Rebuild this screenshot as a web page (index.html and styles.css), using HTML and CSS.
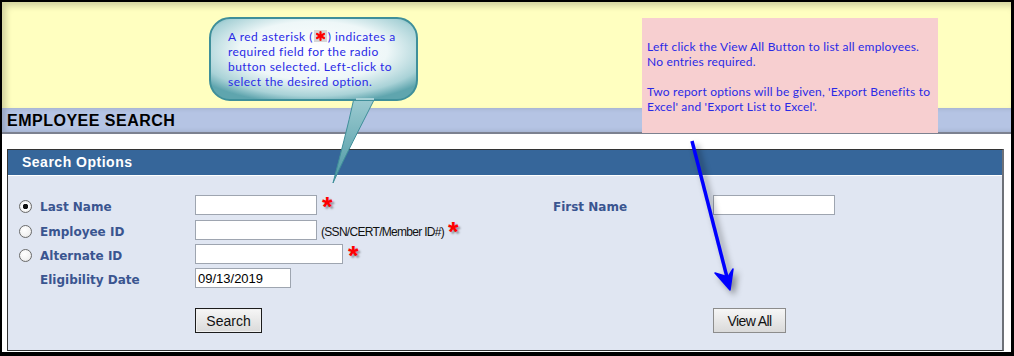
FILE: index.html
```html
<!DOCTYPE html>
<html lang="en">
<head>
  <meta charset="UTF-8">
  <title>Employee Search</title>
  <link rel="stylesheet" href="styles.css">
</head>
<body>
  <div class="frame">
    <div class="notes"></div>
    <div class="page-title">EMPLOYEE SEARCH</div>
    <div class="spacer"></div>

    <div class="panel">
      <div class="panel-head">Search Options</div>
      <div class="panel-body">
        <div class="form-grid">
          <input type="radio" name="by" class="radio" checked>
          <label class="lbl">Last Name</label>
          <div class="field"><input type="text" class="txt w122"><span class="req">*</span></div>
          <label class="lbl">First Name</label>
          <div class="field"><input type="text" class="txt w122"></div>

          <input type="radio" name="by" class="radio">
          <label class="lbl">Employee ID</label>
          <div class="field"><input type="text" class="txt w122"><span class="hint">(SSN/CERT/Member ID#)</span><span class="req">*</span></div>
          <div></div>
          <div></div>

          <input type="radio" name="by" class="radio">
          <label class="lbl">Alternate ID</label>
          <div class="field"><input type="text" class="txt w148"><span class="req">*</span></div>
          <div></div>
          <div></div>

          <div></div>
          <label class="lbl">Eligibility Date</label>
          <div class="field"><input type="text" class="txt w96" value="09/13/2019"></div>
          <div></div>
          <div></div>

          <div></div>
          <div></div>
          <div class="field"><button class="btn btn-main">Search</button></div>
          <div></div>
          <div class="field"><button class="btn btn-view">View All</button></div>
        </div>
      </div>
    </div>

    <!-- help callouts drawn over the page -->
    <div class="bubble">
      <svg class="bubble-shape" width="216" height="172" viewBox="0 0 216 172">
        <defs>
          <radialGradient id="bubbleFill" cx="50%" cy="40%" r="65%">
            <stop offset="0%" stop-color="#ffffff"/>
            <stop offset="55%" stop-color="#eef7f8"/>
            <stop offset="85%" stop-color="#a9d2d7"/>
            <stop offset="100%" stop-color="#5fa5ae"/>
          </radialGradient>
          <linearGradient id="tailFill" x1="0" y1="0" x2="0" y2="1">
            <stop offset="0%" stop-color="#9ccbd1"/>
            <stop offset="100%" stop-color="#4c98a3"/>
          </linearGradient>
        </defs>
        <path d="M146 82 C140 110 132 140 125 167 C137 140 152 112 167 82 Z" fill="url(#tailFill)" stroke="#3f8f9a" stroke-width="1"/>
        <rect x="2" y="2" width="207" height="82" rx="20" ry="20" fill="url(#bubbleFill)" stroke="#3f8f9a" stroke-width="2"/>
        <path d="M148 83 L166 83" stroke="#a9d2d7" stroke-width="2"/>
      </svg>
      <p class="bubble-text">A red asterisk (<svg class="mini-req" width="13" height="12" viewBox="0 0 13 12"><rect x="0" y="0" width="13" height="12" fill="#d6d6d6"/><g stroke="#ff0000" stroke-width="2.2" stroke-linecap="round"><path d="M6.5 2 L6.5 10"/><path d="M3 4 L10 8"/><path d="M10 4 L3 8"/></g></svg>) indicates a<br>required field for the radio<br>button selected. Left-click to<br>select the desired option.</p>
    </div>

    <div class="note">
      <p>Left click the View All Button to list all employees.<br>No entries required.</p>
      <p>Two report options will be given, 'Export Benefits to<br>Excel' and 'Export List to Excel'.</p>
    </div>

    <svg class="arrow" width="60" height="160" viewBox="0 0 60 160">
      <path d="M4 2 L41 146" stroke="#0000ff" stroke-width="3.5" fill="none"/>
      <path d="M27 134 L42 151 L45 130 L40 138 Z" fill="#0000ff" stroke="#0000ff" stroke-width="1.5" stroke-linejoin="round"/>
    </svg>
  </div>
</body>
</html>
```

FILE: styles.css
```css
body {
  margin: 0;
  font-family: "Liberation Sans", Arial, sans-serif;
  background: #ffffff;
}

.frame {
  position: relative;
  width: 1014px;
  height: 356px;
  box-sizing: border-box;
  border-style: solid;
  border-color: #000000;
  border-width: 2px 3px 4px 2px;
  background: #ffffff;
  overflow: hidden;
}

.notes {
  height: 106px;
  background: #ffffc0;
  box-shadow: inset 4px 4px 6px rgba(0, 0, 0, 0.18);
}

.page-title {
  height: 24px;
  line-height: 25px;
  padding-left: 5px;
  background: #b5c4e4;
  border-bottom: 2px solid #7c8190;
  box-shadow: inset 4px 0 5px rgba(0, 0, 0, 0.15);
  font-size: 16px;
  font-weight: bold;
  letter-spacing: 0.5px;
  color: #000000;
}

.spacer {
  height: 15px;
}

.panel {
  margin: 0 5px 0 5px;
  width: 997px;
  height: 202px;
  box-sizing: border-box;
  border: 1px solid #333333;
  border-right: 2px solid #6d7178;
  background: #e0e6f2;
}

.panel-head {
  height: 25px;
  line-height: 25px;
  padding-left: 14px;
  background: #36669a;
  border-bottom: 1px solid #ffffff;
  color: #ffffff;
  font-size: 14px;
  font-weight: bold;
  letter-spacing: 0.5px;
}

.panel-body {
  padding: 19px 0 0 11px;
}

.form-grid {
  display: grid;
  grid-template-columns: 21px 155px 358px 160px 1fr;
  grid-template-rows: 21px 20px 20px 20px 41px;
  row-gap: 4px;
}

.radio {
  appearance: none;
  -webkit-appearance: none;
  margin: 2px 0 0 0;
  width: 13px;
  height: 13px;
  align-self: center;
  border: 1px solid #6a6a6a;
  border-radius: 50%;
  background: radial-gradient(circle at 40% 35%, #ffffff 0%, #f2f2f2 60%, #d6d6d6 100%);
  box-sizing: border-box;
}

.radio:checked {
  background: radial-gradient(circle, #111111 0 2.5px, #ffffff 3px, #f2f2f2 60%, #d6d6d6 100%);
}

.lbl {
  align-self: center;
  padding-top: 3px;
  font-family: "DejaVu Sans", Verdana, sans-serif;
  font-size: 12px;
  font-weight: bold;
  color: #3a5590;
}

.field {
  display: flex;
  align-items: flex-start;
}

.txt {
  height: 20px;
  box-sizing: border-box;
  margin: 0;
  padding: 1px 2px;
  border: 1px solid #9ea5b0;
  background: #ffffff;
  font-family: "Liberation Sans", Arial, sans-serif;
  font-size: 13px;
  color: #000000;
}

.w122 { width: 122px; }
.w148 { width: 148px; }
.w96 { width: 96px; }

.hint {
  margin-left: 4px;
  line-height: 24px;
  font-size: 12px;
  letter-spacing: -0.7px;
  color: #111111;
}

.req {
  display: inline-block;
  margin-left: 5px;
  height: 20px;
  line-height: 24px;
  font-size: 27px;
  font-weight: bold;
  color: #ff0000;
  text-shadow: 2px 2px 2px rgba(0, 0, 0, 0.35);
}

.hint + .req {
  margin-left: 4px;
}

.btn {
  margin: 16px 0 0 0;
  height: 25px;
  padding: 0;
  font-family: "Liberation Sans", Arial, sans-serif;
  font-size: 14px;
  color: #111111;
  background: linear-gradient(#f6f6f6, #dadada);
  cursor: pointer;
}

.btn-main {
  width: 67px;
  border: 1px solid #1c1c1c;
  box-shadow: inset 0 0 0 1px #f0f0f0;
}

.btn-view {
  width: 73px;
  border: 1px solid #8c8c8c;
  letter-spacing: -0.6px;
}

.bubble {
  position: absolute;
  left: 206px;
  top: 14px;
  width: 216px;
  height: 172px;
}

.bubble-shape {
  display: block;
}

.bubble-text {
  position: absolute;
  left: 20px;
  top: 13px;
  width: 190px;
  margin: 0;
  font-family: Lato, "Open Sans", sans-serif;
  font-size: 12px;
  letter-spacing: 0.45px;
  line-height: 15px;
  color: #2a2ae6;
  white-space: nowrap;
}

.mini-req {
  display: inline-block;
  margin: 0 1px;
  vertical-align: -1px;
}

.note {
  position: absolute;
  left: 640px;
  top: 16px;
  width: 296px;
  height: 115px;
  box-sizing: border-box;
  padding: 21px 0 0 5px;
  background: #f7cfd0;
  font-family: Lato, "Open Sans", sans-serif;
  font-size: 12px;
  letter-spacing: 0.2px;
  line-height: 15px;
  color: #2a2ae6;
  white-space: nowrap;
}

.note p {
  margin: 0 0 15px 0;
}

.arrow {
  position: absolute;
  left: 686px;
  top: 137px;
  filter: drop-shadow(4px 4px 3px rgba(0, 0, 0, 0.4));
}
```
